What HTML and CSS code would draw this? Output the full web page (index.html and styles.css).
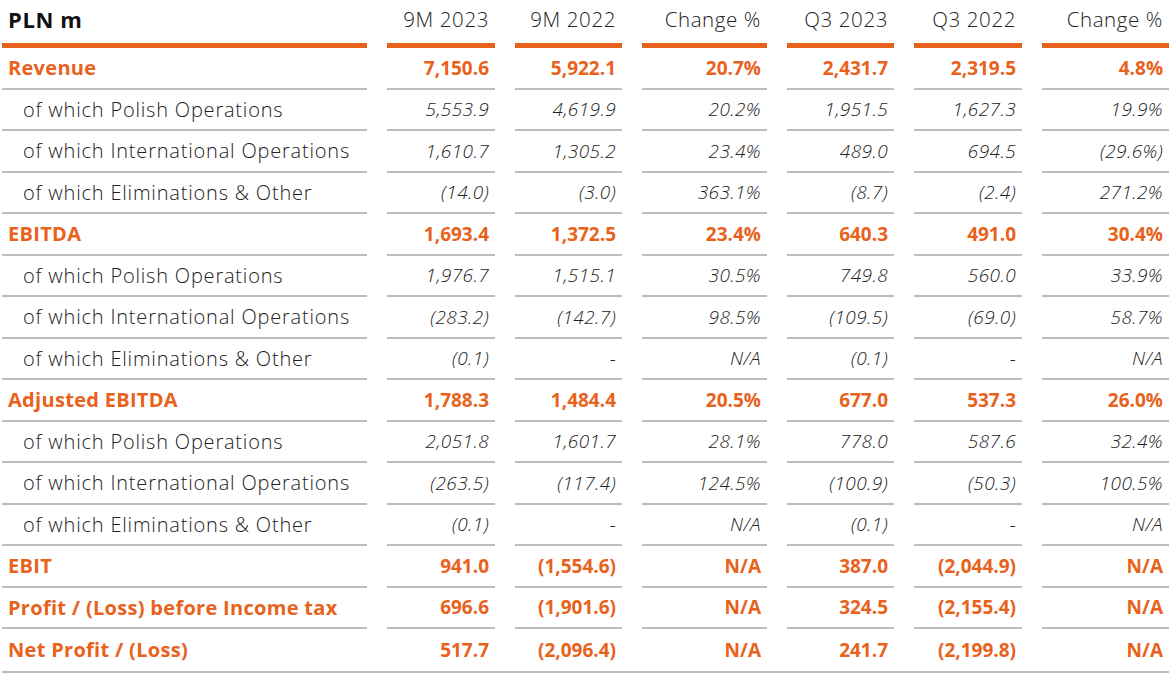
FILE: index.html
```html
<!DOCTYPE html>
<html>
<head>
<meta charset="utf-8">
<link rel="stylesheet" href="styles.css">
</head>
<body>
<div class="fin-table">
  <div class="cell head label">PLN m</div>
  <div class="cell head num">9M 2023</div>
  <div class="cell head num">9M 2022</div>
  <div class="cell head num">Change %</div>
  <div class="cell head num">Q3 2023</div>
  <div class="cell head num">Q3 2022</div>
  <div class="cell head num">Change %</div>

  <div class="cell main label">Revenue</div>
  <div class="cell main num">7,150.6</div>
  <div class="cell main num">5,922.1</div>
  <div class="cell main num">20.7%</div>
  <div class="cell main num">2,431.7</div>
  <div class="cell main num">2,319.5</div>
  <div class="cell main num">4.8%</div>

  <div class="cell sub label">of which Polish Operations</div>
  <div class="cell sub num">5,553.9</div>
  <div class="cell sub num">4,619.9</div>
  <div class="cell sub num">20.2%</div>
  <div class="cell sub num">1,951.5</div>
  <div class="cell sub num">1,627.3</div>
  <div class="cell sub num">19.9%</div>

  <div class="cell sub label">of which International Operations</div>
  <div class="cell sub num">1,610.7</div>
  <div class="cell sub num">1,305.2</div>
  <div class="cell sub num">23.4%</div>
  <div class="cell sub num">489.0</div>
  <div class="cell sub num">694.5</div>
  <div class="cell sub num">(29.6%)</div>

  <div class="cell sub label">of which Eliminations &amp; Other</div>
  <div class="cell sub num">(14.0)</div>
  <div class="cell sub num">(3.0)</div>
  <div class="cell sub num">363.1%</div>
  <div class="cell sub num">(8.7)</div>
  <div class="cell sub num">(2.4)</div>
  <div class="cell sub num">271.2%</div>

  <div class="cell main label">EBITDA</div>
  <div class="cell main num">1,693.4</div>
  <div class="cell main num">1,372.5</div>
  <div class="cell main num">23.4%</div>
  <div class="cell main num">640.3</div>
  <div class="cell main num">491.0</div>
  <div class="cell main num">30.4%</div>

  <div class="cell sub label">of which Polish Operations</div>
  <div class="cell sub num">1,976.7</div>
  <div class="cell sub num">1,515.1</div>
  <div class="cell sub num">30.5%</div>
  <div class="cell sub num">749.8</div>
  <div class="cell sub num">560.0</div>
  <div class="cell sub num">33.9%</div>

  <div class="cell sub label">of which International Operations</div>
  <div class="cell sub num">(283.2)</div>
  <div class="cell sub num">(142.7)</div>
  <div class="cell sub num">98.5%</div>
  <div class="cell sub num">(109.5)</div>
  <div class="cell sub num">(69.0)</div>
  <div class="cell sub num">58.7%</div>

  <div class="cell sub label">of which Eliminations &amp; Other</div>
  <div class="cell sub num">(0.1)</div>
  <div class="cell sub num">-</div>
  <div class="cell sub num">N/A</div>
  <div class="cell sub num">(0.1)</div>
  <div class="cell sub num">-</div>
  <div class="cell sub num">N/A</div>

  <div class="cell main label">Adjusted EBITDA</div>
  <div class="cell main num">1,788.3</div>
  <div class="cell main num">1,484.4</div>
  <div class="cell main num">20.5%</div>
  <div class="cell main num">677.0</div>
  <div class="cell main num">537.3</div>
  <div class="cell main num">26.0%</div>

  <div class="cell sub label">of which Polish Operations</div>
  <div class="cell sub num">2,051.8</div>
  <div class="cell sub num">1,601.7</div>
  <div class="cell sub num">28.1%</div>
  <div class="cell sub num">778.0</div>
  <div class="cell sub num">587.6</div>
  <div class="cell sub num">32.4%</div>

  <div class="cell sub label">of which International Operations</div>
  <div class="cell sub num">(263.5)</div>
  <div class="cell sub num">(117.4)</div>
  <div class="cell sub num">124.5%</div>
  <div class="cell sub num">(100.9)</div>
  <div class="cell sub num">(50.3)</div>
  <div class="cell sub num">100.5%</div>

  <div class="cell sub label">of which Eliminations &amp; Other</div>
  <div class="cell sub num">(0.1)</div>
  <div class="cell sub num">-</div>
  <div class="cell sub num">N/A</div>
  <div class="cell sub num">(0.1)</div>
  <div class="cell sub num">-</div>
  <div class="cell sub num">N/A</div>

  <div class="cell main label">EBIT</div>
  <div class="cell main num">941.0</div>
  <div class="cell main num">(1,554.6)</div>
  <div class="cell main num">N/A</div>
  <div class="cell main num">387.0</div>
  <div class="cell main num">(2,044.9)</div>
  <div class="cell main num">N/A</div>

  <div class="cell main label">Profit / (Loss) before Income tax</div>
  <div class="cell main num">696.6</div>
  <div class="cell main num">(1,901.6)</div>
  <div class="cell main num">N/A</div>
  <div class="cell main num">324.5</div>
  <div class="cell main num">(2,155.4)</div>
  <div class="cell main num">N/A</div>

  <div class="cell main last label">Net Profit / (Loss)</div>
  <div class="cell main last num">517.7</div>
  <div class="cell main last num">(2,096.4)</div>
  <div class="cell main last num">N/A</div>
  <div class="cell main last num">241.7</div>
  <div class="cell main last num">(2,199.8)</div>
  <div class="cell main last num">N/A</div>
</div>
</body>
</html>
```

FILE: styles.css
```css
html, body {
  margin: 0;
  padding: 0;
  background: #ffffff;
}

body {
  font-family: "Open Sans", "DejaVu Sans", sans-serif;
  color: #222222;
}

.fin-table {
  display: grid;
  grid-template-columns: 365px 108px 107px 125px 107px 108px 127px;
  grid-template-rows: 48px;
  grid-auto-rows: 41.5px;
  column-gap: 20px;
  margin-left: 2px;
  width: 1167px;
  border-bottom: 2px solid #bdbdbd;
}

.cell {
  display: flex;
  align-items: center;
  border-bottom: 2px solid #bdbdbd;
  font-size: 19px;
  white-space: nowrap;
}

.cell.num {
  justify-content: flex-end;
  padding-right: 6px;
}

.cell.head {
  border-bottom: 5px solid #e8621c;
  font-weight: 300;
  font-size: 20.5px;
  letter-spacing: 0.6px;
  color: #222222;
  padding-bottom: 5px;
}

.cell.head.label {
  font-weight: 700;
  color: #111111;
  padding-left: 6px;
  font-size: 22px;
  letter-spacing: 0.6px;
}

.cell.main {
  color: #e8621c;
  font-weight: 700;
}

.cell.main.label {
  padding-left: 6px;
  font-size: 20px;
  letter-spacing: 0.3px;
}

.cell.sub {
  font-weight: 300;
  color: #222222;
}

.cell.sub.num {
  font-style: italic;
  letter-spacing: 0.4px;
}

.cell.sub.label {
  padding-left: 21px;
  font-size: 20px;
  letter-spacing: 0.8px;
}

.cell.last {
  border-bottom: none;
}
```
